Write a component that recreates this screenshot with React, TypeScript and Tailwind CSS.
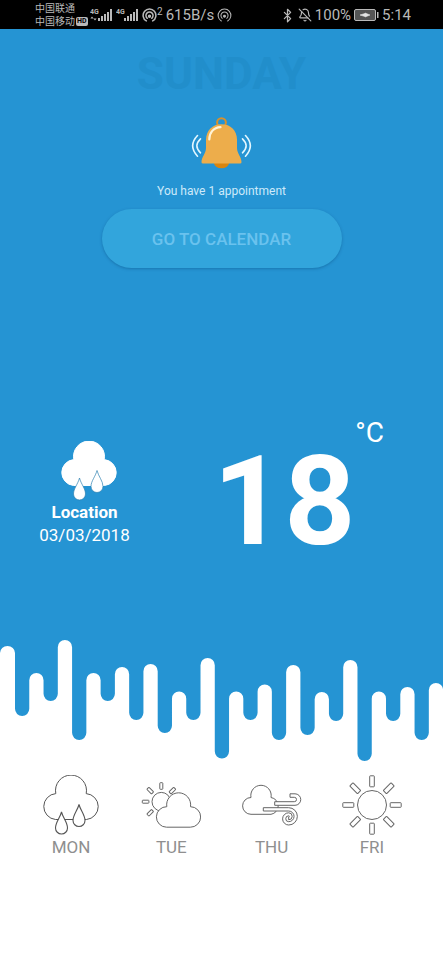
import React from "react";
import { Bluetooth, BellOff } from "lucide-react";

const BLUE = "#2594d3";

/* Status bar */

function Signal({ arrows = false }: { arrows?: boolean }) {
  return (
    <svg width="23" height="16" viewBox="0 0 23 16" fill="#b9b9b9" aria-hidden="true">
      <text x="0" y="7" fontSize="7" fontWeight="700" fontFamily="Roboto, sans-serif">
        4G
      </text>
      {arrows && <path d="M2 9.5l1.6 2H.4zM5 13.5l1.6-2H3.4z" />}
      <rect x="8" y="11" width="2" height="3" />
      <rect x="11" y="9" width="2" height="5" />
      <rect x="14" y="7" width="2" height="7" />
      <rect x="17" y="5" width="2" height="9" />
      <rect x="20" y="2" width="2" height="12" />
    </svg>
  );
}

function Hotspot({ bold = false }: { bold?: boolean }) {
  return (
    <svg
      width="15"
      height="15"
      viewBox="0 0 16 16"
      fill="none"
      stroke="#b9b9b9"
      strokeWidth={bold ? 1.6 : 1.1}
      strokeLinecap="round"
      aria-hidden="true"
    >
      <path d="M4.6 13.8A6.8 6.8 0 1 1 11.4 13.8" />
      <path d="M5.6 11A3.8 3.8 0 1 1 10.4 11" />
      <circle cx="8" cy="8.8" r="1" fill="#b9b9b9" />
    </svg>
  );
}

function Battery() {
  return (
    <svg width="25" height="12" viewBox="0 0 25 12" aria-hidden="true">
      <rect x="0.5" y="0.5" width="21" height="11" rx="1.5" fill="#555" stroke="#b9b9b9" />
      <path d="M6 6l5-1.5V4l5 2-5 2v-.5z" fill="#e5e5e5" stroke="#e5e5e5" strokeWidth="0.6" />
      <rect x="23" y="3" width="1.5" height="6" fill="#b9b9b9" />
    </svg>
  );
}

function StatusBar() {
  return (
    <header className="flex h-[29px] items-center justify-between bg-black pt-px pr-8 pl-[35px] font-[Roboto,'Noto_Sans_CJK_SC',sans-serif] text-[15px] leading-4 text-[#b9b9b9]">
      <div className="flex items-center">
        <div className="w-[55px] text-[10px] leading-[13px]">
          <p>中国联通</p>
          <p className="flex items-center gap-px">
            中国移动
            <span className="rounded-xs bg-[#b9b9b9] px-px text-[7px] leading-[9px] font-bold text-black">
              HD
            </span>
          </p>
        </div>
        <div className="flex items-center gap-[3px]">
          <Signal arrows />
          <Signal />
          <span className="flex items-start">
            <Hotspot bold />
            <span className="text-[10px] leading-[8px]">2</span>
          </span>
          <span>615B/s</span>
          <Hotspot />
        </div>
      </div>
      <div className="flex items-center gap-[3px]">
        <Bluetooth size={15} strokeWidth={2} aria-hidden="true" />
        <BellOff size={14} strokeWidth={2} aria-hidden="true" />
        <span>100%</span>
        <Battery />
        <span>5:14</span>
      </div>
    </header>
  );
}

/* Illustrations */

function Bell() {
  return (
    <svg width="61" height="52" viewBox="0 0 61 52" fill="none" aria-hidden="true">
      <circle cx="30.5" cy="5.6" r="4.4" stroke="#d9912b" strokeWidth="2" />
      <ellipse cx="30.5" cy="46" rx="7.5" ry="5.3" fill="#d9850f" />
      <path
        d="M15 22.8C15 13.5 21.5 7.3 30.5 7.3S46 13.5 46 22.8V31C46 36.5 50.5 40 50.5 45.2Q50.5 46.5 49 46.5H12Q10.5 46.5 10.5 45.2C10.5 40 15 36.5 15 31Z"
        fill="#edad4b"
      />
      <path d="M18.3 22.5C18.3 15.5 22.5 10.6 29.5 10.2" stroke="#fff3d6" strokeWidth="2.2" strokeLinecap="round" />
      <g stroke="#e3f7ff" strokeWidth="1.6" strokeLinecap="round">
        <path d="M6.5 18.5Q-3.2 28.8 6.5 39.2" />
        <path d="M9.5 21.8Q2.2 28.8 9.5 35.8" />
        <path d="M54.5 18.5Q64.2 28.8 54.5 39.2" />
        <path d="M51.5 21.8Q58.8 28.8 51.5 35.8" />
      </g>
    </svg>
  );
}

function RainCloud({ filled = false }: { filled?: boolean }) {
  const line = filled ? "#2b7fb0" : "#555";
  return (
    <svg width="58" height="60" viewBox="0 0 58 60" fill="#fff" strokeWidth="1" aria-hidden="true">
      <path
        d="M13.8 18.6A15.5 15.5 0 1 1 44.2 18.6A13 13 0 0 1 44.5 44.5H13.5A13 13 0 0 1 13.8 18.6Z"
        stroke={filled ? "#fff" : line}
      />
      <g stroke={line} strokeWidth={filled ? 0.7 : 1.1}>
        <path d="M19.5 37C21 43 25.5 47.5 25.5 53A6 6 0 0 1 13.5 53C13.5 47.5 18 43 19.5 37Z" />
        <path d="M37 29.5C38.5 35.5 43 40 43 45.5A6 6 0 0 1 31 45.5C31 40 35.5 35.5 37 29.5Z" />
      </g>
    </svg>
  );
}

function PartlyCloudy() {
  return (
    <svg width="60" height="50" viewBox="0 0 60 50" fill="#fff" stroke="#666" strokeWidth="1" aria-hidden="true">
      <circle cx="20.3" cy="21.7" r="9.3" />
      {[-135, -90, -45, 0, 45].map((angle) => (
        <rect key={angle} x="18.8" y="2.7" width="3" height="6.6" rx="0.6" transform={`rotate(${angle} 20.3 21.7)`} />
      ))}
      <path d="M25.8 26.7A12 12 0 1 1 49.5 26.7A10.2 10.2 0 0 1 49.3 47.2H25.5A10.2 10.2 0 0 1 25.8 26.7Z" />
    </svg>
  );
}

function WindyCloud() {
  return (
    <svg width="60" height="42" viewBox="0 0 60 42" fill="#fff" stroke="#666" strokeWidth="1" aria-hidden="true">
      <path d="M9 13.5A10.2 10.2 0 1 1 29 13.5A8.5 8.5 0 0 1 29 30.3H9A8.4 8.4 0 0 1 9 13.5Z" />
      <path d="M32.7 17.7H52.3A2.2 2.2 0 0 0 52.3 13.3H48V9.8H53A5.75 5.75 0 0 1 53 21.3H32.7Z" />
      <path d="M21.3 23.7H46.7A8.65 8.65 0 0 1 46.7 41A6.1 6.1 0 0 1 46.7 28.8A3.5 3.5 0 0 1 46.7 35.8V33A0.6 0.6 0 0 0 46.7 31.8A2.95 2.95 0 0 0 46.7 37.7A5.35 5.35 0 0 0 46.7 27H21.3Z" />
    </svg>
  );
}

function Sun() {
  return (
    <svg width="60" height="60" viewBox="0 0 60 60" fill="#fff" stroke="#666" strokeWidth="1" aria-hidden="true">
      <circle cx="30" cy="30" r="14.5" />
      {[0, 45, 90, 135, 180, 225, 270, 315].map((angle) => (
        <rect key={angle} x="27.7" y="0.8" width="4.6" height="11" rx="0.6" transform={`rotate(${angle} 30 30)`} />
      ))}
    </svg>
  );
}

/* Dripping edge: each pair is the end of a blue drip and the crest that follows it. */

const DRIPS: [number, number][] = [
  [80, 37], [65, 4], [104, 37], [65, 31], [84, 28], [97, 55.5], [84, 22], [122.5, 55.5],
  [84, 48.5], [104, 29], [99, 56], [85, 24], [125, 55.5], [85, 51], [104, 47],
];

function dripPath() {
  const step = 14.27;
  const r = step / 2;
  let x = 15;
  let d = `M0 0V17.1A7.5 7.1 0 0 1 ${x} 17.1`;
  for (const [bottom, crest] of DRIPS) {
    d += `V${bottom - r}A${r} ${r} 0 0 0 ${x + step} ${bottom - r}`;
    x += step;
    d += `V${crest + r}A${r} ${r} 0 0 1 ${x + step} ${crest + r}`;
    x += step;
  }
  return `${d}V0Z`;
}

function Drips() {
  return (
    <svg viewBox="0 0 443 128" className="block h-auto w-full" aria-hidden="true">
      <path d={dripPath()} fill={BLUE} />
    </svg>
  );
}

const FORECAST = [
  { day: "MON", icon: <RainCloud /> },
  { day: "TUE", icon: <PartlyCloudy /> },
  { day: "THU", icon: <WindyCloud /> },
  { day: "FRI", icon: <Sun /> },
];

export default function App() {
  return (
    <div className="min-h-screen bg-white font-[Roboto,sans-serif]">
      <StatusBar />
      <main>
        <section className="flex flex-col items-center bg-[#2594d3] pt-5 text-white">
          <h1 className="text-[44px] leading-[50px] font-bold text-[#218ecb]">SUNDAY</h1>
          <div className="mt-[18px]">
            <Bell />
          </div>
          <p className="mt-[14px] text-[12px] leading-4 text-[#cdeafa]">You have 1 appointment</p>
          <button
            type="button"
            className="mt-[10px] h-[59px] w-60 rounded-full bg-[#32a5dc] pt-0.5 text-[17px] font-medium text-[#6ac2ee] shadow-[0_1px_3px_rgba(0,60,110,0.35)]"
          >
            GO TO CALENDAR
          </button>

          <div className="mt-[152px] flex w-full items-start justify-between pr-[59px] pb-[70px] pl-[38px]">
            <div className="flex w-[93px] flex-col items-center pt-[21px]">
              <div className="pl-2">
                <RainCloud filled />
              </div>
              <p className="mt-px text-[17px] leading-5 font-bold">Location</p>
              <p className="text-[17px] leading-[26px]">03/03/2018</p>
            </div>
            <div className="flex items-start">
              <p className="mt-[18px] text-[124px] leading-[128px] font-bold">18</p>
              <p className="text-[28px] leading-[26px]">°C</p>
            </div>
          </div>
        </section>

        <Drips />

        <ul className="mt-[11px] grid grid-cols-4 px-[21px]">
          {FORECAST.map(({ day, icon }) => (
            <li key={day} className="flex flex-col items-center">
              <div className="flex h-[60px] items-center">{icon}</div>
              <p className="mt-0.5 text-[17px] leading-5 text-[#8f8f8f]">{day}</p>
            </li>
          ))}
        </ul>
      </main>
    </div>
  );
}
